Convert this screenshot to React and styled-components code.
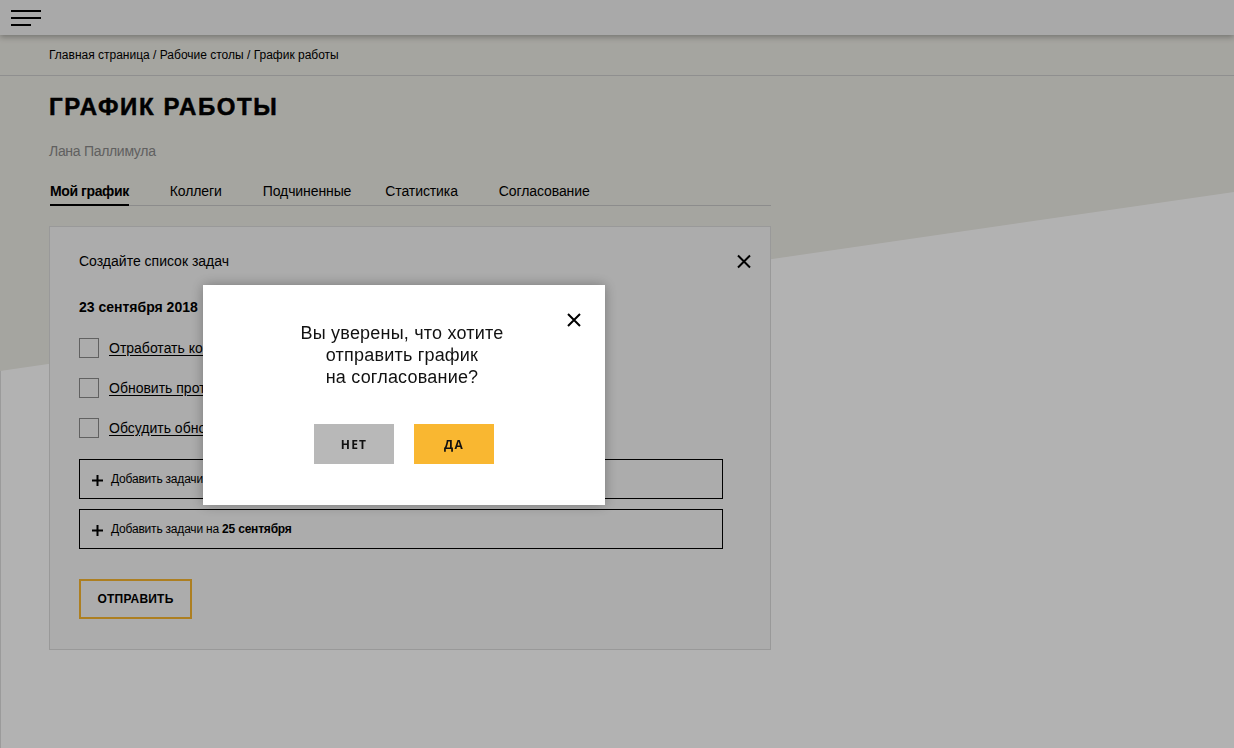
import React, { useState } from 'react';
import styled, { createGlobalStyle } from 'styled-components';

const GlobalStyle = createGlobalStyle`
  html, body {
    margin: 0;
    padding: 0;
  }
  body {
    font-family: "Liberation Sans", Arial, sans-serif;
    color: #000;
  }
  * { box-sizing: border-box; }
`;

const tabs = ['Мой график', 'Коллеги', 'Подчиненные', 'Статистика', 'Согласование'];

const tasks = [
  'Отработать конфликтные ситуации',
  'Обновить протокол встречи',
  'Обсудить обновления',
];

const Page = styled.div`
  position: relative;
  min-height: 100vh;
  background: #edece5;
  overflow: hidden;
  &::before {
    content: '';
    position: absolute;
    inset: 0;
    background: #ffffff;
    box-shadow: inset 1px 0 #dedede;
    clip-path: polygon(0 371px, 100% 192px, 100% 100%, 0 100%);
  }
`;

const Header = styled.header`
  position: relative;
  z-index: 2;
  height: 35px;
  background: #f2f2f2;
  box-shadow: 0 2px 6px rgba(0, 0, 0, 0.3);
  display: flex;
  align-items: center;
  padding-left: 11px;
`;

const Burger = styled.button`
  border: 0;
  background: none;
  padding: 0;
  width: 30px;
  height: 16px;
  display: flex;
  flex-direction: column;
  justify-content: space-between;
  cursor: pointer;
  span {
    display: block;
    height: 2px;
    width: 30px;
    background: #000;
  }
  span:last-child { width: 20px; }
`;

const Crumbs = styled.nav`
  position: relative;
  height: 41px;
  line-height: 40px;
  padding-left: 49px;
  font-size: 12px;
  border-bottom: 1px solid #cdcdcd;
`;

const Content = styled.main`
  position: relative;
  padding: 0 0 0 49px;
  width: 771px;
`;

const Title = styled.h1`
  margin: 17px 0 0;
  font-size: 24px;
  line-height: 28px;
  font-weight: 900;
  letter-spacing: 1.6px;
  -webkit-text-stroke: 0.5px #000;
`;

const Person = styled.div`
  margin-top: 21px;
  font-size: 14px;
  line-height: 18px;
  color: #8a8a8a;
  letter-spacing: -0.3px;
`;

const Tabs = styled.div`
  display: flex;
  margin-top: 22px;
  margin-left: 1px;
  border-bottom: 1px solid #c9c9c9;
`;

const Tab = styled.button`
  border: 0;
  background: none;
  font-family: inherit;
  font-size: 14px;
  line-height: 18px;
  padding: 0 0 4px;
  margin: 0 ${({ $gap }) => $gap}px -1px 0;
  color: #000;
  font-weight: ${({ $active }) => ($active ? 700 : 400)};
  border-bottom: 2px solid ${({ $active }) => ($active ? '#000' : 'transparent')};
  letter-spacing: ${({ $active }) => ($active ? '-0.4px' : '-0.1px')};
  cursor: pointer;
`;

const Card = styled.section`
  margin-top: 20px;
  border: 1px solid #dcdcdc;
  background: #f6f6f6;
  padding: 25px 19px 30px 29px;
`;

const CardHead = styled.div`
  display: flex;
  justify-content: space-between;
  align-items: center;
  font-size: 14px;
  line-height: 18px;
`;

const CloseBtn = styled.button`
  border: 0;
  background: none;
  padding: 0;
  width: 14px;
  height: 14px;
  display: flex;
  cursor: pointer;
  svg { display: block; }
`;

const DateLabel = styled.div`
  margin-top: 28px;
  font-size: 14px;
  line-height: 18px;
  font-weight: 700;
`;

const TaskList = styled.ul`
  list-style: none;
  margin: 22px 0 0;
  padding: 0;
  display: flex;
  flex-direction: column;
  gap: 20px;
`;

const TaskRow = styled.li`
  display: flex;
  align-items: center;
  gap: 10px;
  height: 20px;
  font-size: 14px;
`;

const Box = styled.span`
  width: 20px;
  height: 20px;
  border: 1px solid #8c8c8c;
  flex: none;
`;

const TaskLink = styled.a`
  color: #000;
  text-decoration: underline;
  text-underline-offset: 2px;
`;

const AddList = styled.div`
  margin-top: 21px;
  width: 644px;
  display: flex;
  flex-direction: column;
  gap: 10px;
`;

const AddRow = styled.button`
  height: 40px;
  border: 1px solid #000;
  background: transparent;
  display: flex;
  align-items: center;
  gap: 8px;
  padding: 0 0 0 12px;
  font-family: inherit;
  font-size: 12px;
  letter-spacing: -0.2px;
  color: #000;
  cursor: pointer;
  svg { margin-top: 2px; }
  b { font-weight: 700; }
`;

const SendButton = styled.button`
  margin-top: 30px;
  width: 113px;
  height: 40px;
  border: 2px solid #f8b730;
  background: transparent;
  font-family: inherit;
  font-weight: 700;
  font-size: 12px;
  letter-spacing: 0.2px;
  color: #000;
  cursor: pointer;
`;

const Overlay = styled.div`
  position: fixed;
  inset: 0;
  z-index: 10;
  background: rgba(0, 0, 0, 0.3);
`;

const Modal = styled.div`
  position: absolute;
  left: 203px;
  top: 285px;
  width: 402px;
  height: 220px;
  background: #fff;
  box-shadow: 0 0 12px rgba(0, 0, 0, 0.3);
  padding-top: 37px;
  text-align: center;
`;

const ModalClose = styled(CloseBtn)`
  position: absolute;
  top: 28px;
  right: 24px;
  width: 14px;
  height: 14px;
`;

const Question = styled.p`
  margin: 0 4px 0 0;
  font-size: 18px;
  line-height: 22px;
  letter-spacing: 0.2px;
  color: #111;
`;

const Actions = styled.div`
  margin-top: 36px;
  display: flex;
  justify-content: center;
  gap: 20px;
`;

const ActionButton = styled.button`
  width: 80px;
  height: 40px;
  border: 0;
  background: ${({ $primary }) => ($primary ? '#f9b731' : '#b8b8b8')};
  font-family: "Open Sans", "Liberation Sans", sans-serif;
  font-weight: 700;
  font-size: 12px;
  letter-spacing: 1.2px;
  color: #111;
  cursor: pointer;
`;

function Cross({ size = 14 }) {
  return (
    <svg width={size} height={size} viewBox="0 0 14 14">
      <path d="M1 1L13 13M13 1L1 13" stroke="#000" strokeWidth="2" fill="none" />
    </svg>
  );
}

function Plus() {
  return (
    <svg width="11" height="11" viewBox="0 0 11 11">
      <path d="M5.5 0V11M0 5.5H11" stroke="#000" strokeWidth="2" fill="none" />
    </svg>
  );
}

const tabGaps = [41, 41, 34, 41, 0];

export default function App() {
  const [active, setActive] = useState(tabs[0]);
  const [open, setOpen] = useState(true);

  return (
    <Page>
      <GlobalStyle />
      <Header>
        <Burger aria-label="Меню">
          <span />
          <span />
          <span />
        </Burger>
      </Header>
      <Crumbs>Главная страница / Рабочие столы / График работы</Crumbs>
      <Content>
        <Title>ГРАФИК РАБОТЫ</Title>
        <Person>Лана Паллимула</Person>
        <Tabs>
          {tabs.map((t, i) => (
            <Tab key={t} $active={active === t} $gap={tabGaps[i]} onClick={() => setActive(t)}>
              {t}
            </Tab>
          ))}
        </Tabs>
        <Card>
          <CardHead>
            Создайте список задач
            <CloseBtn aria-label="Закрыть">
              <Cross size={15} />
            </CloseBtn>
          </CardHead>
          <DateLabel>23 сентября 2018</DateLabel>
          <TaskList>
            {tasks.map(t => (
              <TaskRow key={t}>
                <Box />
                <TaskLink href="#">{t}</TaskLink>
              </TaskRow>
            ))}
          </TaskList>
          <AddList>
            <AddRow>
              <Plus />
              <span>Добавить задачи на <b>24 сентября</b></span>
            </AddRow>
            <AddRow>
              <Plus />
              <span>Добавить задачи на <b>25 сентября</b></span>
            </AddRow>
          </AddList>
          <SendButton onClick={() => setOpen(true)}>ОТПРАВИТЬ</SendButton>
        </Card>
      </Content>
      {open && (
        <Overlay>
          <Modal>
            <ModalClose aria-label="Закрыть" onClick={() => setOpen(false)}>
              <Cross size={14} />
            </ModalClose>
            <Question>
              Вы уверены, что хотите
              <br />
              отправить график
              <br />
              на согласование?
            </Question>
            <Actions>
              <ActionButton onClick={() => setOpen(false)}>НЕТ</ActionButton>
              <ActionButton $primary onClick={() => setOpen(false)}>ДА</ActionButton>
            </Actions>
          </Modal>
        </Overlay>
      )}
    </Page>
  );
}
